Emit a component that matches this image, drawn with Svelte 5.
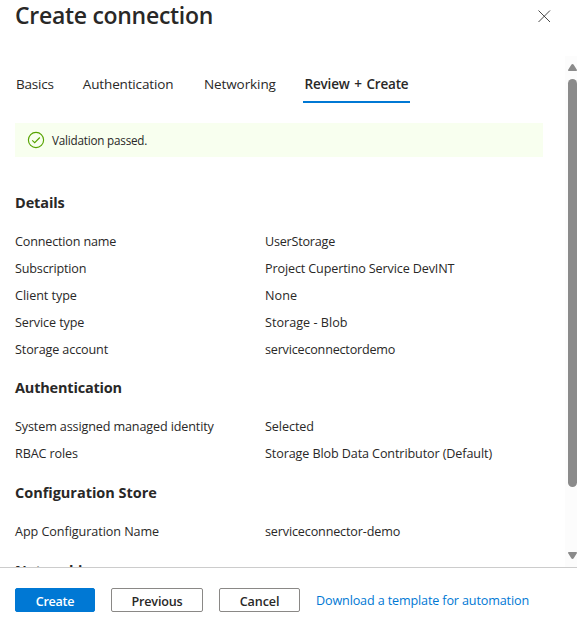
<script>
  const tabs = [
    { label: 'Basics', ls: -0.19, gap: 29 },
    { label: 'Authentication', ls: -0.15, gap: 30.6 },
    { label: 'Networking', ls: -0.08, gap: 26.7 },
    { label: 'Review + Create', ls: -0.2, gap: 0, active: true }
  ];

  // ls / vls: letter-spacing of the label and of the value, in px
  const sections = [
    {
      title: 'Details', ls: -0.1,
      rows: [
        { label: 'Connection name', ls: -0.17, value: 'UserStorage', vls: -0.22 },
        { label: 'Subscription', ls: -0.17, value: 'Project Cupertino Service DevINT', vls: -0.13 },
        { label: 'Client type', ls: -0.05, value: 'None', vls: 0.1 },
        { label: 'Service type', ls: -0.1, value: 'Storage - Blob', vls: 0.02 },
        { label: 'Storage account', ls: -0.12, value: 'serviceconnectordemo', vls: -0.2 }
      ]
    },
    {
      title: 'Authentication', ls: -0.19,
      rows: [
        { label: 'System assigned managed identity', ls: -0.13, value: 'Selected', vls: -0.07 },
        { label: 'RBAC roles', ls: -0.12, value: 'Storage Blob Data Contributor (Default)', vls: -0.11 }
      ]
    },
    {
      title: 'Configuration Store', ls: -0.02,
      rows: [{ label: 'App Configuration Name', ls: -0.06, value: 'serviceconnector-demo', vls: -0.15 }]
    },
    { title: 'Networking', ls: -0.1, rows: [] }
  ];
</script>

<div class="panel">
  <header>
    <h1>Create connection</h1>
    <button class="close" aria-label="Close">
      <svg width="13" height="13" viewBox="0 0 13 13"><path d="M.5.5l11.5 11.5M12 .5L.5 12" stroke="#333" stroke-width="0.9" fill="none" /></svg>
    </button>
  </header>

  <div class="body">
    <main>
      <nav>
        {#each tabs as tab}
          <span class="tab" class:active={tab.active} style="letter-spacing:{tab.ls}px;margin-right:{tab.gap}px">{tab.label}</span>
        {/each}
      </nav>

      <div class="banner">
        <svg width="18" height="18" viewBox="0 0 18 18" fill="none" stroke="#57a300">
          <circle cx="9" cy="9" r="7.6" stroke-width="1.15" />
          <path d="M5.2 9.3l2.5 2.4 5.1-5.2" stroke-width="1.1" />
        </svg>
        <span>Validation passed.</span>
      </div>

      {#each sections as section}
        <section>
          <h2 style="letter-spacing:{section.ls}px">{section.title}</h2>
          {#each section.rows as row}
            <div class="row">
              <span class="label" style="letter-spacing:{row.ls}px">{row.label}</span>
              <span style="letter-spacing:{row.vls}px">{row.value}</span>
            </div>
          {/each}
        </section>
      {/each}
    </main>

    <div class="scrollbar">
      <svg width="9" height="7" viewBox="0 0 9 7"><path d="M4.5 0Q5.2 0 5.7.8L9 6Q9.2 7 8.2 7H.8Q-.2 7 0 6L3.3.8Q3.8 0 4.5 0Z" fill="#8b8b8b" /></svg>
      <div class="thumb"></div>
      <svg class="down" width="9" height="7" viewBox="0 0 9 7"><path d="M4.5 7Q5.2 7 5.7 6.2L9 1Q9.2 0 8.2 0H.8Q-.2 0 0 1L3.3 6.2Q3.8 7 4.5 7Z" fill="#8b8b8b" /></svg>
    </div>
  </div>

  <footer>
    <button class="btn primary">Create</button>
    <button class="btn previous">Previous</button>
    <button class="btn cancel">Cancel</button>
    <span class="link">Download a template for automation</span>
  </footer>
</div>

<style>
  .panel {
    width: 577px;
    height: 626px;
    display: flex;
    flex-direction: column;
    overflow: hidden;
    background: #fff;
    color: #292827;
    font: 12.6px/27px 'Open Sans', sans-serif;
  }
  header {
    height: 56px;
    flex: none;
    display: flex;
    justify-content: space-between;
    align-items: flex-start;
    padding: 0 26px 0 15px;
    box-sizing: border-box;
  }
  h1 {
    margin: 0;
    font-size: 23px;
    line-height: 31px;
    font-weight: 600;
    letter-spacing: -0.29px;
  }
  .close {
    display: flex;
    margin: 10px 0 0;
    padding: 0;
    border: 0;
    background: none;
  }
  .body {
    height: 511px;
    flex: none;
    display: flex;
    overflow: hidden;
  }
  main {
    flex: 1;
    padding: 0 22px 0 15px;
    white-space: nowrap;
  }
  nav {
    display: flex;
    height: 47px;
    padding-left: 1px;
  }
  .tab {
    font-size: 13.5px;
    line-height: 57px;
  }
  .active {
    width: 105px;
    height: 45px;
    padding-left: 2px;
    border-bottom: 2px solid #0078d4;
    font-weight: 600;
    word-spacing: 1.4px;
  }
  .banner {
    display: flex;
    align-items: center;
    height: 34px;
    margin: 20px 0 21px;
    padding-left: 12px;
    gap: 7px;
    background: #f8ffef;
    font-size: 11.7px;
    letter-spacing: -0.21px;
  }
  h2 {
    margin: 0;
    padding: 11px 0 12px;
    font-size: 14.5px;
    line-height: 27px;
    font-weight: 700;
  }
  section:nth-of-type(n + 3) {
    padding-top: 1px;
  }
  .row {
    display: flex;
    height: 27px;
  }
  .label {
    width: 250px;
    flex: none;
  }
  .scrollbar {
    width: 12px;
    display: flex;
    flex-direction: column;
    align-items: flex-end;
    padding: 8px 0;
    box-sizing: border-box;
    background: #fcfcfc;
  }
  .thumb {
    width: 9px;
    height: 408px;
    margin-top: 8px;
    border-radius: 4.5px;
    background: #8b8b8b;
  }
  .down {
    margin-top: auto;
  }
  footer {
    flex: 1;
    display: flex;
    align-items: flex-start;
    gap: 16px;
    padding: 20px 15px 0;
    border-top: 1px solid #ccc;
    background: #fff;
  }
  .btn {
    width: 92px;
    height: 24px;
    padding: 3px 0 0;
    box-sizing: border-box;
    border: 1px solid #8a8886;
    border-radius: 2px;
    background: #fff;
    color: #292827;
    font: 600 12.6px/19px 'Open Sans', sans-serif;
    letter-spacing: -0.19px;
  }
  .primary {
    width: 80px;
    border-color: #0078d4;
    background: #0078d4;
    color: #fff;
    letter-spacing: -0.28px;
  }
  .cancel {
    width: 81px;
    letter-spacing: -0.1px;
  }
  .link {
    color: #0078d4;
    line-height: 26px;
    letter-spacing: -0.14px;
    white-space: nowrap;
  }
</style>
